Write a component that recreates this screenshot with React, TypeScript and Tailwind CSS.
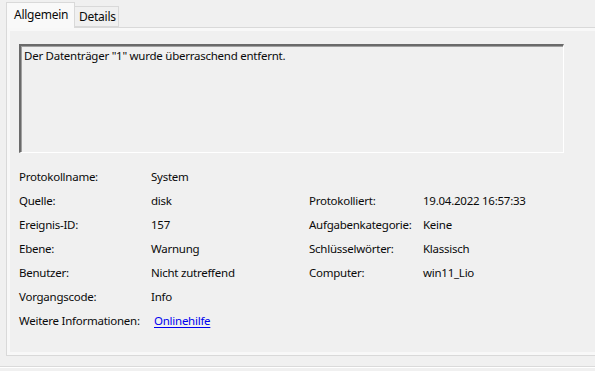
import React from "react";

const rows: [string, React.ReactNode, string, string][] = [
  ["Protokollname:", "System", "", ""],
  ["Quelle:", "disk", "Protokolliert:", "19.04.2022 16:57:33"],
  ["Ereignis-ID:", "157", "Aufgabenkategorie:", "Keine"],
  ["Ebene:", "Warnung", "Schlüsselwörter:", "Klassisch"],
  ["Benutzer:", "Nicht zutreffend", "Computer:", "win11_Lio"],
  ["Vorgangscode:", "Info", "", ""],
  [
    "Weitere Informationen:",
    <span className="ml-[3px] text-[#0000ee] underline underline-offset-2">Onlinehilfe</span>,
    "",
    "",
  ],
];

export default function App() {
  return (
    <div
      className="w-[595px] h-[371px] bg-[#f0f0f0] overflow-hidden text-[11.5px] tracking-[-0.25px] text-[#0a0a0a]"
      style={{ fontFamily: '"Noto Sans", sans-serif' }}
    >
      <div className="flex items-end h-[28px] pl-[6px] relative z-10">
        <div className="w-[69px] h-[26px] border border-b-0 border-[#d9d9d9] bg-[#f9f9f9] pl-[7px] pt-[5px] leading-[14px] text-[12px]">
          Allgemein
        </div>
        <div className="w-[44px] h-[21px] mb-px border border-l-0 border-[#d9d9d9] bg-[#f0f0f0] pl-[4px] pt-[3px] leading-[14px] text-[12px]">
          Details
        </div>
      </div>
      <div className="-mt-px ml-[6px] w-[620px] h-[329px] border border-r-0 border-[#d9d9d9]">
        <div className="h-full border-[3px] border-r-0 border-[#f8f8f8] bg-[#f0f0f0] pl-[9px] pt-[13px]">
          <div className="w-[545px] h-[109px] border-t-2 border-l-2 border-t-[#6a6a6a] border-l-[#6a6a6a] border-b border-r border-b-white border-r-white shadow-[inset_1px_1px_0_#a0a0a0] pl-[3px] pt-[3px] leading-[14px]">
            Der Datenträger "1" wurde überraschend entfernt.
          </div>
          <div className="mt-[12px] grid grid-cols-[132px_158px_114px_1fr] auto-rows-[24px] items-center">
            {rows.map((r, i) => (
              <React.Fragment key={i}>
                <div>{r[0]}</div>
                <div>{r[1]}</div>
                <div>{r[2]}</div>
                <div>{r[3]}</div>
              </React.Fragment>
            ))}
          </div>
        </div>
      </div>
      <div className="mt-[10px] h-px bg-[#dadada]" />
      <div className="h-px bg-white" />
    </div>
  );
}
